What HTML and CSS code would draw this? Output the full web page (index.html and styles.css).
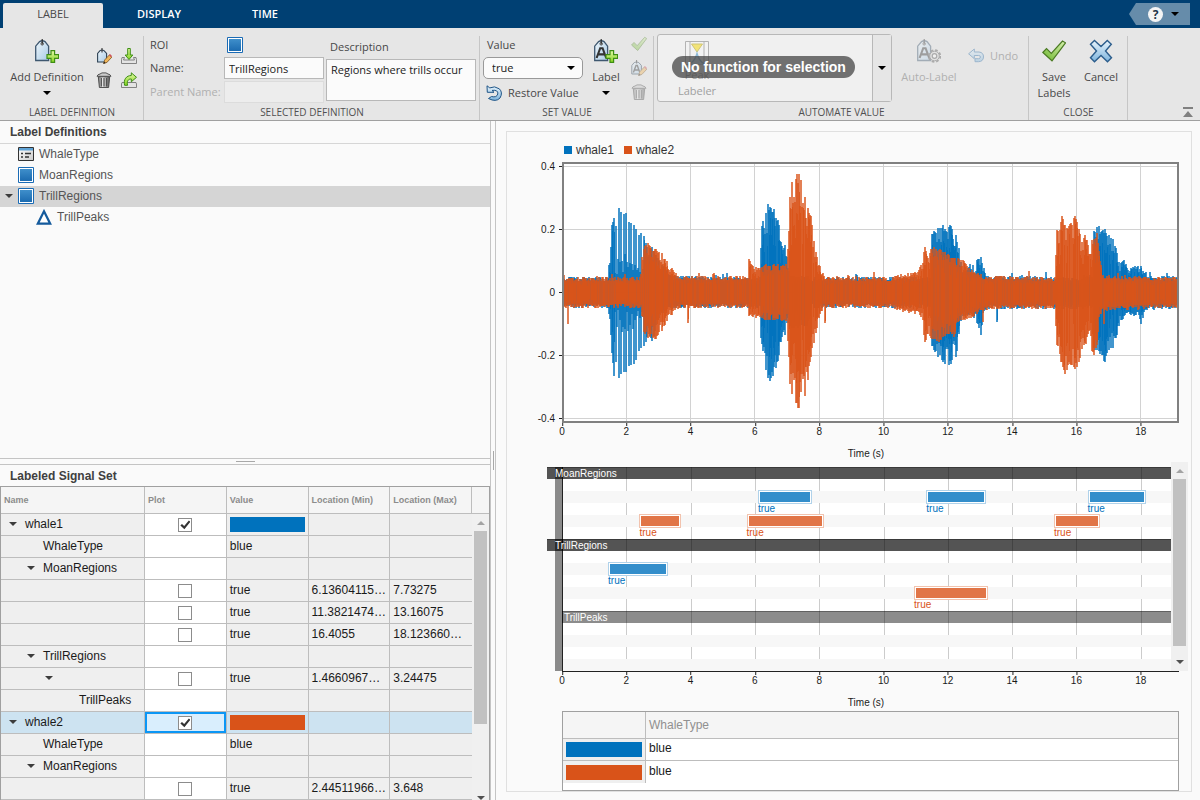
FILE: index.html
```
<!DOCTYPE html>
<html lang="en">
<head>
<meta charset="utf-8">
<title>Signal Labeler</title>
<link rel="stylesheet" href="styles.css">
</head>
<body>
<svg class="defs" aria-hidden="true">
  <defs>
    <linearGradient id="g-tag" x1="0" y1="0" x2="1" y2="1"><stop offset="0" stop-color="#eef6fb"/><stop offset="1" stop-color="#a9cbe6"/></linearGradient>
    <linearGradient id="g-green" x1="0" y1="0" x2="0" y2="1"><stop offset="0" stop-color="#e4f9a8"/><stop offset="1" stop-color="#84d41e"/></linearGradient>
    <linearGradient id="g-check" x1="1" y1="0" x2="0" y2="1"><stop offset="0" stop-color="#d8f2b0"/><stop offset="1" stop-color="#6cb52d"/></linearGradient>
    <linearGradient id="g-blue" x1="0" y1="0" x2="0" y2="1"><stop offset="0" stop-color="#e8f4fc"/><stop offset="1" stop-color="#7db4dd"/></linearGradient>
    <linearGradient id="g-roi" x1="0" y1="0" x2="0" y2="1"><stop offset="0" stop-color="#3f8fcb"/><stop offset="1" stop-color="#1c6bb0"/></linearGradient>
    <linearGradient id="g-can" x1="0" y1="0" x2="1" y2="0"><stop offset="0" stop-color="#777"/><stop offset=".4" stop-color="#eee"/><stop offset="1" stop-color="#555"/></linearGradient>
    <linearGradient id="g-form" x1="0" y1="0" x2="1" y2="1"><stop offset="0" stop-color="#fff"/><stop offset="1" stop-color="#ccc"/></linearGradient>
  </defs>
  <symbol id="i-tag" viewBox="0 0 24 24">
    <path d="M.7 21.5V7.2L4.6 2.6Q7.3.9 10 2.6L13.6 7.2V21.5Z" fill="url(#g-tag)" stroke="#3f5870" stroke-width="1.3"/>
    <circle cx="7.2" cy="4.8" r="1.3" fill="#fff" stroke="#333" stroke-width=".8"/><path d="M7.2 0V5.5" stroke="#222" stroke-width="1.1"/>
  </symbol>
  <symbol id="i-plus" viewBox="0 0 24 24"><path d="M16 11.7h3.600v4h4v3.700h-4v4H16v-4h-4v-3.700h4z" fill="url(#g-green)" stroke="#3e8e14" stroke-width="1.2"/></symbol>
  <symbol id="i-a" viewBox="0 0 24 24"><path d="M2.600 19 6.200 9.200H8.600L12.200 19M4.700 15.400h5.600" fill="none" stroke="#333" stroke-width="2.100"/></symbol>
  <symbol id="i-add" viewBox="0 0 24 24"><use href="#i-tag"/><use href="#i-plus"/></symbol>
  <symbol id="i-label" viewBox="0 0 24 24"><use href="#i-tag"/><use href="#i-a"/><use href="#i-plus"/></symbol>
  <symbol id="i-auto" viewBox="0 0 24 24"><use href="#i-tag"/><use href="#i-a"/>
    <circle cx="17.500" cy="17" r="5.800" fill="none" stroke="#555" stroke-width="1.800" stroke-dasharray="2.600 1.950"/><circle cx="17.500" cy="17" r="4.800" fill="#ddd" stroke="#555"/><circle cx="17.500" cy="17" r="2.300" fill="#fff" stroke="#555" stroke-width="1.200"/>
  </symbol>
  <symbol id="i-pencil" viewBox="0 0 16 16"><path d="M7.600 15.600 8.600 12 13.400 6.900 15.800 9.200 10.900 14.400Z" fill="#f0b65a" stroke="#7d5420" stroke-width=".8"/><path d="m13 7.100 1-1.200 2 2.200-.9 1.200Z" fill="#d0505a"/><path d="m7.400 15.800.7-2.300 1.500 1.500z" fill="#222"/></symbol>
  <symbol id="i-edit" viewBox="0 0 16 16"><path d="M1.600 14V5.500L4 2.600Q6 1.400 8 2.600l2.600 2.900V14Z" fill="url(#g-tag)" stroke="#2f4254" stroke-width="1.100"/><path d="M6 0v4.500" stroke="#222"/><use href="#i-pencil"/></symbol>
  <symbol id="i-edit-a" viewBox="0 0 16 16"><path d="M.8 14V5.500L3.200 2.600Q5.500 1.200 7.800 2.600l2.600 2.900V14Z" fill="url(#g-tag)" stroke="#2f4254"/><path d="M5.600 0v3.500" stroke="#222"/><path d="m2.400 12.500 2.600-7h1.300l2.500 7M3.800 10h3.900" fill="none" stroke="#333" stroke-width="1.400"/><use href="#i-pencil"/></symbol>
  <symbol id="i-import" viewBox="0 0 16 16"><path d="M1 9.500h2.500L2.500 12h11l-1-2.500H15l.5 2v4H.5v-4z" fill="#e4e4e4" stroke="#777" stroke-width=".9"/><path d="M6.700.5h2.600V7h2.500L8 11.500 4.200 7h2.500z" fill="url(#g-green)" stroke="#3e8e14"/></symbol>
  <symbol id="i-export" viewBox="0 0 16 16"><path d="M1 10.500h14l.5 1.500v3.500H.5V12z" fill="#e4e4e4" stroke="#777" stroke-width=".9"/><path d="M3.600 13.300C2.200 7.500 5.500 3.500 10.300 3.500V.8l5.200 4.500-5.200 4.500V7C7.500 6.800 5.500 9 6.600 13.300Z" fill="url(#g-green)" stroke="#3e8e14"/></symbol>
  <symbol id="i-trash" viewBox="0 0 16 16"><path d="M2.300 4.800h11.400L12.600 15.500H3.400Z" fill="url(#g-can)" stroke="#444" stroke-width=".9"/><path d="M5.300 6v8.500M8 6v8.500m2.700-8.500V14.500" stroke="#444" stroke-width="1.100"/><path d="M1 4.300Q1.600 2.300 4 2L6 .9h4l2 1.100q2.400.3 3 2.300z" fill="#ccc" stroke="#444" stroke-width=".9"/></symbol>
  <symbol id="i-restore" viewBox="0 0 16 16"><path d="M1 .8 1.300 7.300H8L6 5.400Q12.400 4.600 11.800 9 10.700 12.900 5.500 11.500L2.500 13.500Q10 17.500 14 13 17.200 7.500 13.300 3.800 8.500.4 3.800 2.900Z" fill="url(#g-blue)" stroke="#1f5587"/></symbol>
  <symbol id="i-undo" viewBox="0 0 16 16"><path d="M.6 5.800 6.300 1v3H11Q15.600 4.500 15.500 9 15.200 13.600 10.500 13.700H7v-3h3.500Q12.500 10.500 12.500 9 12.400 7.500 10.500 7.500H6.300v3.200Z" fill="url(#g-blue)" stroke="#2f6fa8"/></symbol>
  <symbol id="i-check" viewBox="0 0 24 24"><path d="M.8 13.500 4.500 9.700 9.300 14.500 20.500 2l3 1.800L10 21.800Z" fill="url(#g-check)" stroke="#4a7a22" stroke-width="1.200"/></symbol>
  <symbol id="i-cancel" viewBox="0 0 24 24"><path d="M5.500 1.500 12 7.600 18.300 1.500l4 3.800-5.800 6.700 6 6.800-4 3.900L12 16.500 5.500 22.700 1.500 18.800l6-6.800-6-6.700Z" fill="url(#g-blue)" stroke="#2b5d8c" stroke-width="1.400"/></symbol>
  <symbol id="i-peak" viewBox="0 0 24 24"><path d="M.5.500h23v23H.5zM5 .5v23m14-23v23" fill="#f5f5f5" stroke="#777"/><path d="M6.500 3h11L12 11Z" fill="#f5d800" stroke="#b09a00"/><path d="M4 23.500Q10 20 12 12.500 14 20 20 23.500" fill="#b5d8ee" stroke="#2f86be" stroke-width="1.400"/></symbol>
  <symbol id="i-roi" viewBox="0 0 16 16"><path d="M.5.500h15v15H.5z" fill="#fff" stroke="#1b6bb5"/><path d="M2 2h12v12H2z" fill="url(#g-roi)"/></symbol>
  <symbol id="i-attr" viewBox="0 0 16 16"><path d="M.5 1.500h15v13H.5z" fill="url(#g-form)" stroke="#333"/><path d="M1 2h14v2.500H1z" fill="#5fa3d6"/><path d="M3 7.500h2M3 11h2M7 7.500h6M7 11h4" stroke="#333" stroke-width="1.600"/></symbol>
  <symbol id="i-point" viewBox="0 0 16 16"><path d="M8 2.300 14.200 14.700H1.800Z" fill="#fff" stroke="#145a9c" stroke-width="2.200"/></symbol>
</svg>

<header class="toolstrip">
  <nav class="tabs" role="tablist">
    <button class="tab tab-active" role="tab" aria-selected="true">LABEL</button>
    <button class="tab" role="tab">DISPLAY</button>
    <button class="tab" role="tab">TIME</button>
    <button class="help" aria-label="Help"><span class="help-mark">?</span><span class="caret"></span></button>
  </nav>
  <div class="ribbon">
    <section class="section sec-definition">
      <div class="section-body">
        <button class="tool tool-add"><svg class="icon-lg"><use href="#i-add"/></svg><span>Add Definition</span><span class="caret"></span></button>
        <div class="mini-grid">
          <button class="mini" aria-label="Edit definition"><svg><use href="#i-edit"/></svg></button>
          <button class="mini" aria-label="Import definitions"><svg><use href="#i-import"/></svg></button>
          <button class="mini" aria-label="Delete definition"><svg><use href="#i-trash"/></svg></button>
          <button class="mini" aria-label="Export definitions"><svg><use href="#i-export"/></svg></button>
        </div>
      </div>
      <h2 class="section-title">LABEL DEFINITION</h2>
    </section>
    <section class="section sec-selected">
      <div class="section-body">
        <div class="form">
          <span>ROI</span><svg class="icon-roi"><use href="#i-roi"/></svg>
          <label for="name">Name:</label><input class="field" id="name" type="text" value="TrillRegions">
          <label for="parent" class="dim">Parent Name:</label><input class="field" id="parent" type="text" disabled>
        </div>
        <div class="describe">
          <label for="desc">Description</label>
          <textarea class="field area" id="desc">Regions where trills occur</textarea>
        </div>
      </div>
      <h2 class="section-title">SELECTED DEFINITION</h2>
    </section>
    <section class="section sec-value">
      <div class="section-body">
        <div class="value-col">
          <label for="value">Value</label>
          <div class="select"><select id="value"><option>true</option><option>false</option></select><span class="caret"></span></div>
          <button class="inline-tool"><svg><use href="#i-restore"/></svg><span>Restore Value</span></button>
        </div>
        <button class="tool"><svg class="icon-lg"><use href="#i-label"/></svg><span>Label</span><span class="caret"></span></button>
        <div class="mini-col">
          <button class="mini" disabled aria-label="Accept"><svg><use href="#i-check"/></svg></button>
          <button class="mini" disabled aria-label="Edit label"><svg><use href="#i-edit-a"/></svg></button>
          <button class="mini" disabled aria-label="Delete label"><svg><use href="#i-trash"/></svg></button>
        </div>
      </div>
      <h2 class="section-title">SET VALUE</h2>
    </section>
    <section class="section sec-automate">
      <div class="section-body">
        <div class="gallery">
          <button class="gallery-item" disabled><svg class="icon-lg"><use href="#i-peak"/></svg><span>Peak<br>Labeler</span></button>
          <span class="pill">No function for selection</span>
          <button class="gallery-open" aria-label="More functions"><span class="caret"></span></button>
        </div>
        <button class="tool tool-auto" disabled><svg class="icon-lg"><use href="#i-auto"/></svg><span>Auto-Label</span></button>
        <button class="inline-tool undo" disabled><svg><use href="#i-undo"/></svg><span>Undo</span></button>
      </div>
      <h2 class="section-title">AUTOMATE VALUE</h2>
    </section>
    <section class="section sec-close">
      <div class="section-body">
        <button class="tool"><svg class="icon-lg"><use href="#i-check"/></svg><span>Save<br>Labels</span></button>
        <button class="tool"><svg class="icon-lg"><use href="#i-cancel"/></svg><span>Cancel</span></button>
      </div>
      <h2 class="section-title">CLOSE</h2>
    </section>
    <button class="collapse" aria-label="Collapse toolstrip"><svg width="12" height="11"><path d="M1 0h10v2H1zM6 4l5 6H1z" fill="#808080"/></svg></button>
  </div>
</header>

<main class="workspace">
  <aside class="side">
    <section class="pane">
      <h2 class="pane-title">Label Definitions</h2>
      <ul class="tree">
        <li class="node"><svg><use href="#i-attr"/></svg>WhaleType</li>
        <li class="node"><svg><use href="#i-roi"/></svg>MoanRegions</li>
        <li class="node selected"><i class="twisty"></i><svg><use href="#i-roi"/></svg>TrillRegions</li>
        <li class="node child"><svg><use href="#i-point"/></svg>TrillPeaks</li>
      </ul>
    </section>
    <div class="split-h"></div>
    <section class="pane">
      <h2 class="pane-title pane-title-grid">Labeled Signal Set</h2>
      <div class="grid-wrap">
        <table class="signals">
          <colgroup><col class="c-name"><col><col><col><col></colgroup>
          <thead><tr><th>Name</th><th>Plot</th><th>Value</th><th>Location (Min)</th><th>Location (Max)</th></tr></thead>
          <tbody>
            <tr><td class="lv1"><i class="twisty"></i>whale1</td><td class="plot-cell"><input type="checkbox" checked aria-label="Plot whale1"></td><td class="sw"><span class="swatch blue"></span></td><td></td><td></td></tr>
            <tr><td class="lv2">WhaleType</td><td class="plot-cell"></td><td>blue</td><td></td><td></td></tr>
            <tr><td class="lv2"><i class="twisty"></i>MoanRegions</td><td class="plot-cell"></td><td></td><td></td><td></td></tr>
            <tr><td></td><td class="plot-cell"><input type="checkbox" aria-label="Plot region 1"></td><td>true</td><td>6.13604115…</td><td>7.73275</td></tr>
            <tr><td></td><td class="plot-cell"><input type="checkbox" aria-label="Plot region 2"></td><td>true</td><td>11.3821474…</td><td>13.16075</td></tr>
            <tr><td></td><td class="plot-cell"><input type="checkbox" aria-label="Plot region 3"></td><td>true</td><td>16.4055</td><td>18.123660…</td></tr>
            <tr><td class="lv2"><i class="twisty"></i>TrillRegions</td><td class="plot-cell"></td><td></td><td></td><td></td></tr>
            <tr><td class="lv3"><i class="twisty"></i></td><td class="plot-cell"><input type="checkbox" aria-label="Plot trill 1"></td><td>true</td><td>1.4660967…</td><td>3.24475</td></tr>
            <tr><td class="lv4">TrillPeaks</td><td class="plot-cell"></td><td></td><td></td><td></td></tr>
            <tr class="picked"><td class="lv1"><i class="twisty"></i>whale2</td><td class="plot-cell"><input type="checkbox" checked aria-label="Plot whale2"></td><td class="sw"><span class="swatch orange"></span></td><td></td><td></td></tr>
            <tr><td class="lv2">WhaleType</td><td class="plot-cell"></td><td>blue</td><td></td><td></td></tr>
            <tr><td class="lv2"><i class="twisty"></i>MoanRegions</td><td class="plot-cell"></td><td></td><td></td><td></td></tr>
            <tr><td></td><td class="plot-cell"><input type="checkbox" aria-label="Plot region 1 of whale2"></td><td>true</td><td>2.44511966…</td><td>3.648</td></tr>
          </tbody>
        </table>
        <div class="gutter">
          <div class="gutter-head"></div>
          <div class="scroll"><i class="arrow up"></i><div class="track"><div class="thumb thumb-table"></div></div><i class="arrow down"></i></div>
        </div>
      </div>
    </section>
  </aside>
  <div class="split-v"></div>
  <section class="charts">
    <div class="card">
      <div class="legend"><span><i class="key blue"></i>whale1</span><span><i class="key orange"></i>whale2</span></div>
      <div class="plot" id="plot">
        <svg id="wave" viewBox="0 0 617 261" preserveAspectRatio="none"></svg>
      </div>
      <div class="axis axis-top" data-axis><span class="axis-title">Time (s)</span></div>
      <div class="viewer">
        <div class="grid-lines" data-grid></div>
        <div class="spine"></div>
        <div class="lanes">
          <div class="lane-head top">MoanRegions</div>
          <div class="lane"></div>
          <div class="lane alt" data-color="blue" data-regions="6.136-7.733 11.382-13.161 16.406-18.124"></div>
          <div class="lane"></div>
          <div class="lane alt" data-color="orange" data-regions="2.445-3.648 5.78-8.09 15.36-16.7"></div>
          <div class="lane"></div>
          <div class="lane-head top">TrillRegions</div>
          <div class="lane"></div>
          <div class="lane alt" data-color="blue" data-regions="1.466-3.245"></div>
          <div class="lane"></div>
          <div class="lane alt" data-color="orange" data-regions="11-13.21"></div>
          <div class="lane"></div>
          <div class="lane-head sub">TrillPeaks</div>
          <div class="lane"></div>
          <div class="lane alt"></div>
          <div class="lane"></div>
          <div class="lane alt"></div>
        </div>
        <div class="scroll viewer-scroll"><i class="arrow up"></i><div class="track"><div class="thumb thumb-viewer"></div></div><i class="arrow down"></i></div>
      </div>
      <div class="axis axis-bottom" data-axis><span class="axis-title">Time (s)</span></div>
      <div class="attr-wrap">
        <table class="attrs">
          <thead><tr><th class="a-key"></th><th>WhaleType</th></tr></thead>
          <tbody>
            <tr><td class="a-key"><span class="swatch blue"></span></td><td>blue</td></tr>
            <tr><td class="a-key"><span class="swatch orange"></span></td><td>blue</td></tr>
          </tbody>
        </table>
      </div>
    </div>
  </section>
</main>
<script src="script.js"></script>
</body>
</html>
```
FILE: styles.css
```
* { box-sizing: border-box; }
body { margin: 0; height: 100vh; display: flex; flex-direction: column; overflow: hidden; background: #fafafa; color: #1a1a1a; font: 12px/16px "Liberation Sans", Arial, sans-serif; }
button, input, select, textarea { font: inherit; color: inherit; margin: 0; }
button { border: 0; background: none; padding: 0; }
h2 { margin: 0; font-size: 12px; }
.defs { position: absolute; width: 0; height: 0; }
.caret { width: 0; height: 0; border: 4px solid transparent; border-top-color: #000; border-bottom: 0; }
.blue { background: #0072bd; }
.orange { background: #d95319; }

/* toolstrip */
.toolstrip { flex: none; font: 11px/16px "Open Sans", "Noto Sans", sans-serif; color: #484848; }
.tabs { display: flex; align-items: flex-start; height: 28px; padding: 3px 10px 3px 3px; background: #004073; }
.tab { width: 106px; height: 25px; color: #fff; padding-bottom: 3px; font-weight: 600; }
.tab-active { width: 100px; background: #e6e6e6; color: #484848; border-radius: 2px 2px 0 0; font-weight: 400; margin-right: 3px; }
.help { margin-left: auto; width: 61px; height: 22px; padding-left: 8px; display: flex; align-items: center; justify-content: center; gap: 8px; background: #668caa; clip-path: polygon(0 50%, 7px 0, 100% 0, 100% 100%, 7px 100%); }
.help-mark { width: 15px; height: 15px; border-radius: 50%; background: #f4f4f4; color: #1e3448; font: bold 12px/15px "Open Sans", sans-serif; }
.ribbon { display: flex; position: relative; height: 93px; background: #e6e6e6; border-bottom: 1px solid #a0a0a0; }
.section { position: relative; display: flex; flex-direction: column; }
.section::after { content: ""; position: absolute; right: 0; top: 8px; bottom: 0; width: 1px; background: #c6c6c6; }
.section-body { display: flex; flex: 1; min-height: 0; }
.section-title { font-size: 10px; height: 15px; line-height: 15px; font-weight: 400; text-align: center; color: #505050; white-space: nowrap; }
.sec-definition { width: 144px; }
.sec-definition .section-body { padding: 0 7px 0 6px; justify-content: space-between; }
.sec-selected { width: 336px; }
.sec-selected .section-body { padding: 6px 4px 0 6px; gap: 2px; }
.sec-value { width: 174px; }
.sec-value .section-body { padding-left: 3px; gap: 9px; }
.sec-value .tool { width: 28px; }
.sec-automate { width: 375px; }
.sec-automate .section-body { padding-left: 3px; }
.sec-close { width: 99px; }
.sec-close .section-body { padding-left: 5px; gap: 7px; }
.sec-close .tool { width: 40px; }
.tool { display: flex; flex-direction: column; align-items: center; padding-top: 11px; line-height: 16px; gap: 6px; white-space: nowrap; }
.tool-add { width: 82px; }
.tool:disabled, .dim, .inline-tool:disabled { color: #b0b0b0; }
.tool:disabled svg, .mini:disabled svg, .inline-tool:disabled svg { opacity: .4; }
.icon-lg { width: 24px; height: 24px; flex: none; }
.mini-grid { display: grid; grid-template-columns: 16px 16px; gap: 8px 9px; padding-top: 20px; align-content: start; }
.mini { width: 16px; height: 16px; }
.mini svg { width: 16px; height: 16px; display: block; }
.form { display: grid; grid-template-columns: 72px 100px; grid-template-rows: 21px 22px 22px; row-gap: 2px; column-gap: 2px; align-items: center; white-space: nowrap; }
.icon-roi { width: 16px; height: 16px; margin-left: 3px; }
.field { width: 100%; height: 22px; padding: 0 4px; background: #fbfbfb; border: 1px solid #b8b8b8; color: #1a1a1a; }
.field:disabled { background: #ededed; border-color: #dcdcdc; }
.describe { flex: 1; padding-top: 5px; display: flex; flex-direction: column; gap: 4px; }
.describe label { padding-left: 4px; }
.area { height: 42px; display: block; resize: none; line-height: 20px; overflow: hidden; }
.value-col { width: 100px; padding-top: 9px; display: flex; flex-direction: column; }
.value-col label { padding-left: 4px; }
.select { position: relative; margin-top: 4px; }
.select select { appearance: none; width: 100%; height: 22px; padding: 0 8px; border: 1px solid #999; border-radius: 5px; background: #fbfbfb; color: #1a1a1a; display: block; }
.select .caret { position: absolute; right: 8px; top: 9px; }
.inline-tool { display: flex; align-items: center; gap: 6px; padding-left: 3px; margin-top: 6px; white-space: nowrap; }
.inline-tool svg { width: 16px; height: 16px; flex: none; }
.mini-col { display: flex; flex-direction: column; gap: 8px; padding-top: 8px; margin-left: 2px; }
.gallery { position: relative; display: flex; width: 235px; height: 68px; margin-top: 6px; background: #f0f0f0; border: 1px solid #b8b8b8; border-radius: 3px; }
.gallery-item { width: 78px; padding-top: 6px; display: flex; flex-direction: column; align-items: center; line-height: 16px; color: #a0a0a0; gap: 2px; }
.gallery-item svg { opacity: .5; }
.gallery-open { margin-left: auto; width: 19px; background: #e6e6e6; border-left: 1px solid #b8b8b8; display: flex; align-items: center; justify-content: center; }
.pill { position: absolute; left: 14px; top: 21px; height: 22px; padding: 0 9px; border-radius: 11px; background: rgba(70, 70, 70, .75); color: #fff; font: bold 14px/22px "Liberation Sans", Arial, sans-serif; white-space: nowrap; }
.tool-auto { width: 74px; }
.undo { align-self: flex-start; margin-top: 20px; padding-left: 2px; }
.collapse { position: absolute; right: 6px; bottom: 2px; line-height: 0; }

/* workspace */
.workspace { flex: 1; min-height: 0; display: grid; grid-template-columns: 490fr 6px 704fr; }
.side { display: grid; grid-template-rows: 337fr 7px 335fr; min-height: 0; min-width: 0; }
.pane { display: flex; flex-direction: column; min-height: 0; overflow: hidden; }
.pane-title { height: 22px; line-height: 22px; padding-left: 10px; color: #404040; flex: none; }
.pane-title-grid { height: 21px; }
.tree { list-style: none; margin: 0; padding: 0; border-top: 1px solid #d6d6d6; color: #555; }
.node { display: flex; align-items: center; gap: 5px; height: 21px; padding: 0 0 2px 18px; position: relative; }
.node svg { width: 16px; height: 16px; }
.node.child { padding-left: 36px; }
.node.selected { background: #d5d5d5; }
.node .twisty { position: absolute; left: 5px; }
.twisty { display: inline-block; width: 0; height: 0; border: 4px solid transparent; border-top-color: #3c3c3c; border-bottom: 0; }
.split-h { border-top: 1px solid #c4c4c4; border-bottom: 1px solid #c4c4c4; display: flex; align-items: center; justify-content: center; }
.split-h::after { content: ""; width: 19px; height: 1px; background: #a8a8a8; }
.split-v { border-left: 1px solid #c4c4c4; border-right: 1px solid #c4c4c4; display: flex; align-items: center; justify-content: center; }
.split-v::after { content: ""; width: 1px; height: 19px; background: #a8a8a8; }
.grid-wrap { flex: 1; min-height: 0; display: flex; border: 1px solid #a0a0a0; border-bottom: 0; background: #efefef; overflow: hidden; }
.signals { width: calc(100% - 17px); flex: none; table-layout: fixed; border-collapse: separate; border-spacing: 0; align-self: flex-start; }
.c-name { width: 144px; }
.signals th { height: 27px; padding: 0 0 0 3px; background: #f5f5f5; font-size: 9px; text-align: left; color: #8c8c8c; border-right: 1px solid #bdbdbd; border-bottom: 1px solid #bdbdbd; }
.signals td { height: 22px; line-height: 16px; padding: 0 0 2px 3px; border-right: 1px solid #bdbdbd; border-bottom: 1px solid #bdbdbd; white-space: nowrap; overflow: hidden; }
.signals td:last-child { border-right: 0; }
.signals .lv1, .signals .lv2, .signals .lv3, .signals .lv4 { position: relative; }
.signals .lv1 { padding-left: 24px; }
.signals .lv2 { padding-left: 42px; }
.signals .lv4 { padding-left: 78px; }
.signals .twisty { position: absolute; top: 8px; }
.lv1 .twisty { left: 8px; }
.lv2 .twisty { left: 26px; }
.lv3 .twisty { left: 44px; }
.signals .plot-cell { background: #fff; text-align: center; padding: 0; line-height: 0; }
.signals .sw { padding: 0 3px; line-height: 0; }
.swatch { display: block; height: 15px; }
.signals input { appearance: none; width: 14px; height: 14px; border: 1px solid #8c8c8c; background: #fff; position: relative; vertical-align: middle; margin-top: 1px; }
.signals input:checked::before { content: ""; position: absolute; inset: 1px; background: #333; clip-path: polygon(0 55%, 16% 40%, 38% 60%, 85% 5%, 100% 18%, 40% 92%); }
.picked td { background: #cde3f1; }
.signals .picked .plot-cell { background: #d9eefd; box-shadow: inset 0 0 0 2px #0b96f5; }
.gutter { width: 17px; display: flex; flex-direction: column; flex: none; }
.gutter-head { height: 27px; flex: none; background: #f5f5f5; border-bottom: 1px solid #bdbdbd; }
.scroll { flex: 1; display: flex; flex-direction: column; align-items: center; background: #f0f0f0; padding: 7px 0 0; }
.track { flex: 1; width: 13px; min-height: 0; }
.thumb { background: #c1c1c1; }
.thumb-table { height: 73%; }
.thumb-viewer { height: 92%; }
.arrow { width: 0; height: 0; border: 4px solid transparent; flex: none; }
.arrow.up { border-bottom-color: #a3a3a3; border-top: 0; margin-bottom: 6px; }
.arrow.down { border-top-color: #505050; border-bottom: 0; }

/* charts */
.charts { padding: 10px 8px 8px 10px; min-height: 0; min-width: 0; display: flex; }
.card { flex: 1; min-width: 0; display: flex; flex-direction: column; border: 1px solid #e0e0e0; padding: 0 12px 0 55px; }
.legend { height: 30px; display: flex; gap: 10px; padding: 10px 0 0 2px; color: #333; flex: none; }
.legend span { display: flex; align-items: center; gap: 4px; height: 16px; }
.key { width: 8px; height: 8px; }
.plot { flex: 1; min-height: 0; position: relative; background: #fff; }
.plot svg { position: absolute; width: 100%; height: 100%; }
.plot::after { content: ""; position: absolute; inset: 0; border: 2px solid #808080; }
.wave { fill: none; stroke-width: 2; }
.wave-blue { stroke: #0072bd; opacity: .74; }
.wave-orange { stroke: #d95319; opacity: .74; }
.wave.core { stroke-width: 1; opacity: .85; }
.grid-path { stroke: #d2d2d2; fill: none; }
.ytick { position: absolute; right: 100%; margin-right: 7px; height: 12px; margin-top: -5px; font-size: 10px; line-height: 12px; }
.ytick::after { content: ""; position: absolute; left: 100%; top: 5px; margin-left: 4px; width: 3px; height: 1px; background: #222; }
.axis { position: relative; flex: none; font-size: 10px; line-height: 12px; }
.axis-top { height: 44px; }
.axis-bottom { height: 40px; border-top: 1px solid #222; }
.xtick { position: absolute; top: 3px; transform: translateX(-50%); }
.xtick::before { content: ""; position: absolute; left: 50%; top: -3px; width: 1px; height: 3px; background: #222; }
.axis-title { position: absolute; top: 25px; left: 0; right: 9px; text-align: center; }
.viewer { position: relative; flex: none; background: #fff; }
.grid-lines { position: absolute; inset: 0; }
.grid-lines i { position: absolute; top: 0; bottom: 0; width: 1px; background: #ccc; }
.spine { position: absolute; left: -7px; top: 0; bottom: 0; width: 8px; background: #8a8a8a; border-right: 1px solid #222; }
.lanes { position: relative; }
.lane { height: 12px; position: relative; margin-left: 1px; }
.lane.alt { background: #f7f7f7; }
.lane-head { height: 12px; font-size: 10px; line-height: 11px; color: #fff; border-top: 1px solid rgba(0, 0, 0, .3); }
.lane-head.top { margin-left: -15px; padding-left: 8px; background: rgba(0, 0, 0, .67); }
.lane-head.sub { padding-left: 2px; background: rgba(0, 0, 0, .45); }
.region { position: absolute; top: -1px; height: 14px; border: 1px solid; background: #fff; padding: 1px; }
.region::before { content: ""; display: block; height: 10px; }
.region.r-blue { border-color: #b0d2ea; color: #0072bd; }
.region.r-blue::before { background: #338ecb; }
.region.r-orange { border-color: #f2c3ae; color: #d95319; }
.region.r-orange::before { background: #e17547; }
.region span { position: absolute; left: -1px; top: 12px; font-size: 10px; line-height: 12px; }
.viewer-scroll { position: absolute; right: -9px; top: -5px; bottom: 0; width: 17px; padding-bottom: 7px; }
.attr-wrap { height: 80px; flex: none; background: #fff; border: 1px solid #a0a0a0; }
.attrs { width: 100%; border-collapse: separate; border-spacing: 0; table-layout: fixed; }
.attrs th { height: 27px; padding: 0 0 1px 3px; text-align: left; font-weight: 400; color: #909090; background: #f5f5f5; border-bottom: 1px solid #bdbdbd; }
.attrs td { height: 22px; padding: 0 0 3px 3px; line-height: 16px; border-bottom: 1px solid #bdbdbd; }
.attrs .a-key { width: 83px; padding: 0 3px; border-right: 1px solid #bdbdbd; }
.attrs td.a-key { background: #efefef; }
.attrs tr:last-child td { border-bottom: 0; }
```
FILE: script.js
```
// Horizontal scale: seconds to plot units of the 617 x 261 drawing area.
const WIDTH = 617, HEIGHT = 261, ZERO = 130, PER_SECOND = 32.15, PER_UNIT = 314;
const toX = t => t * PER_SECOND;
const pct = t => toX(t) / WIDTH * 100 + '%';
const NS = 'http://www.w3.org/2000/svg';

// Amplitude envelopes: [x, above, below].
const whale1 = [[0,13,14],[46,13,14],[48,30,28],[50,66,64],[52,79,86],[54,66,70],[57,84,86],[60,78,80],[64,79,80],[67,70,74],[73,66,71],[76,56,61],[79,59,56],[82,56,57],[85,48,47],[91,44,49],[95,35,30],[101,25,20],[110,14,14],[198,13,14],[199,45,46],[200,71,55],[202,79,72],[205,82,84],[206,89,86],[209,84,91],[212,84,80],[216,73,71],[220,62,60],[224,45,37],[226,25,25],[228,16,36],[245,16,34],[250,13,14],[369,13,14],[370,62,56],[376,65,66],[383,66,72],[384,76,72],[387,68,77],[391,66,66],[394,56,65],[397,46,45],[398,35,36],[401,20,22],[407,22,22],[409,30,25],[412,20,26],[415,32,31],[419,35,43],[422,24,20],[425,14,15],[531,13,15],[532,60,55],[535,71,60],[538,62,61],[543,62,70],[548,59,60],[552,54,54],[555,40,42],[558,28,32],[562,33,25],[566,20,19],[570,25,22],[576,24,22],[578,29,38],[581,22,25],[584,15,16],[617,13,14]];
const whale2 = [[0,13,14],[79,13,14],[80,38,25],[82,45,40],[85,50,45],[90,43,45],[93,42,50],[96,42,42],[101,37,38],[104,32,30],[107,28,28],[111,20,18],[117,14,14],[186,14,14],[187,33,24],[190,26,24],[193,22,23],[198,24,25],[202,27,29],[212,28,28],[225,27,30],[227,60,70],[228,95,95],[230,119,107],[233,115,112],[236,117,118],[239,116,107],[242,105,108],[245,90,100],[247,80,75],[249,75,65],[251,60,55],[254,42,42],[256,34,32],[259,18,20],[262,14,14],[330,13,14],[338,16,18],[356,19,20],[360,32,28],[363,45,52],[366,35,42],[370,46,48],[377,43,50],[385,40,42],[392,34,44],[397,35,30],[403,30,28],[408,22,25],[415,18,20],[422,14,16],[493,13,14],[495,62,55],[498,66,65],[500,76,76],[502,70,84],[507,66,76],[510,72,74],[513,77,78],[517,68,74],[520,50,60],[523,58,55],[526,48,45],[531,52,64],[535,61,54],[537,42,25],[540,16,18],[550,14,16],[617,13,14]];
const spikes1 = { 435: [0, 30], 165: [19, 0], 484: [20, 0] };
const spikes2 = { 6: [0, 32], 126: [0, 31], 263: [0, 31], 312: [20, 0], 467: [21, 0], 542: [0, 32], 421: [0, 30] };

let seed = 11;
const random = () => (seed = (seed * 16807) % 2147483647) / 2147483647;

function envelope(points, x) {
  let i = 1;
  while (points[i][0] < x) i++;
  const [x0, a0, b0] = points[i - 1], [x1, a1, b1] = points[i];
  const k = (x - x0) / (x1 - x0);
  return [a0 + (a1 - a0) * k, b0 + (b1 - b0) * k];
}

function addPath(svg, className, d) {
  const path = document.createElementNS(NS, 'path');
  path.setAttribute('class', className);
  path.setAttribute('d', d);
  svg.append(path);
}

// The wave is drawn as two interleaved sets of strokes, then a denser core.
function drawWave(svg, points, spikes, name, sparseUntil) {
  const paths = ['', ''];
  let core = '';
  for (let x = 1; x < 616; x++) {
    let [up, down] = envelope(points, x);
    const sparse = x > 52 && x < sparseUntil;
    if (sparse) {
      const phase = x % 5;
      if (phase !== 2 && phase !== 4) { up *= 0.22 + 0.3 * random(); down *= 0.22 + 0.3 * random(); }
    } else if (up + down > 50) {
      const dip = random() < 0.3 ? 0.72 : 0.92;
      up *= dip + 0.1 * random();
      down *= dip + 0.1 * random();
    } else {
      up += random() * 5 - 2.5;
      down += random() * 5 - 2.5;
      if (random() < 0.06) { up += 3; }
    }
    const spike = spikes[x];
    if (spike) { up = Math.max(up, spike[0]); down = Math.max(down, spike[1]); }
    paths[x % 2] += `M${x} ${Math.round(ZERO - up)}V${Math.round(ZERO + down)}`;
    if (!sparse && random() < 0.72) {
      const a = up * (0.55 + 0.4 * random()), b = down * (0.55 + 0.4 * random());
      core += `M${x + 0.5} ${Math.round(ZERO - a)}V${Math.round(ZERO + b)}`;
    }
  }
  for (const d of paths) addPath(svg, 'wave wave-' + name, d);
  addPath(svg, 'wave core wave-' + name, core);
}

const svg = document.getElementById('wave');
let lines = '';
for (let t = 2; t < 19; t += 2) lines += `M${Math.floor(toX(t)) + 0.5} 0V${HEIGHT}`;
for (let v = -2; v <= 2; v++) lines += `M0 ${Math.round(ZERO - v * 0.2 * PER_UNIT) + 0.5}H${WIDTH}`;
addPath(svg, 'grid-path', lines);
drawWave(svg, whale1, spikes1, 'blue', 82);
drawWave(svg, whale2, spikes2, 'orange', 0);

const plot = document.getElementById('plot');
for (const v of [0.4, 0.2, 0, -0.2, -0.4]) {
  const tick = document.createElement('span');
  tick.className = 'ytick';
  tick.textContent = v;
  tick.style.top = (ZERO - v * PER_UNIT) / HEIGHT * 100 + '%';
  plot.append(tick);
}

for (const axis of document.querySelectorAll('[data-axis]')) {
  for (let t = 0; t < 19; t += 2) {
    const tick = document.createElement('span');
    tick.className = 'xtick';
    tick.textContent = t;
    tick.style.left = pct(t);
    axis.append(tick);
  }
}

for (const box of document.querySelectorAll('[data-grid]')) {
  for (let t = 2; t < 19; t += 2) {
    const line = document.createElement('i');
    line.style.left = pct(t);
    box.append(line);
  }
}

for (const lane of document.querySelectorAll('[data-regions]')) {
  for (const pair of lane.dataset.regions.split(' ')) {
    const [from, to] = pair.split('-').map(Number);
    const region = document.createElement('div');
    region.className = 'region r-' + lane.dataset.color;
    region.style.left = `calc(${pct(from)} - 2px)`;
    region.style.width = `calc(${(to - from) * PER_SECOND / WIDTH * 100}% + 3px)`;
    const text = document.createElement('span');
    text.textContent = 'true';
    region.append(text);
    lane.append(region);
  }
}
```
